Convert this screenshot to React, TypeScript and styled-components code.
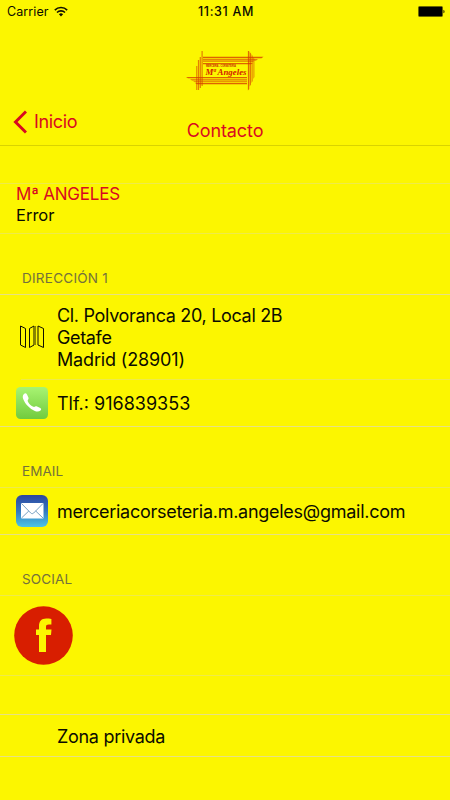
import React from "react";
import styled, { createGlobalStyle } from "styled-components";

const Global = createGlobalStyle`
  * { box-sizing: border-box; }
  body { margin: 0; background: #fcf600; }
`;

const Screen = styled.main`
  width: 450px;
  height: 800px;
  overflow: hidden;
  background: #fcf600;
  color: #0b0b00;
  font-family: Inter, "Liberation Sans", sans-serif;
  display: flex;
  flex-direction: column;
`;

const Header = styled.header`
  height: 146px;
  flex: none;
  border-bottom: 1px solid #d9d300;
  display: flex;
  flex-direction: column;
`;

const StatusBar = styled.div`
  height: 22px;
  display: grid;
  grid-template-columns: 1fr auto 1fr;
  align-items: center;
  padding: 1px 5px 0 7px;
`;

const Carrier = styled.div`
  display: flex;
  align-items: center;
  gap: 6px;
`;

const Battery = styled.div`
  justify-self: end;
  display: flex;
  padding-bottom: 2px;
`;

const LogoArea = styled.div`
  height: 71px;
  padding-top: 27px;
  display: flex;
  justify-content: center;
`;

const NavBar = styled.nav`
  flex: 1;
  display: grid;
  grid-template-columns: 1fr auto 1fr;
  align-items: start;
  padding: 0 0 0 13px;
`;

const Back = styled.a`
  display: flex;
  align-items: center;
  gap: 7px;
  padding-top: 17px;
`;

const Title = styled.h1`
  margin: 27px 13px 0 0;
  font-size: 18px;
  font-weight: 400;
  line-height: 22px;
`;

const Label = styled.span<{ $size?: number; $track?: number; $color?: string; $weight?: number; $line?: number }>`
  font-size: ${(p) => p.$size ?? 18}px;
  letter-spacing: ${(p) => p.$track ?? 0}px;
  color: ${(p) => p.$color ?? "inherit"};
  font-weight: ${(p) => p.$weight ?? 370};
  line-height: ${(p) => p.$line ?? 22}px;
  white-space: nowrap;
  display: block;
`;

const Summary = styled.section`
  height: 51px;
  margin-top: 37px;
  flex: none;
  padding: 0 16px;
  border-top: 1px solid #eeea4a;
  border-bottom: 1px solid #eeea4a;
`;

const SectionTitle = styled.h2`
  height: 60px;
  margin: 0;
  flex: none;
  padding: 0 22px 5px;
  display: flex;
  align-items: flex-end;
`;

const Group = styled.section<{ $faintTop?: boolean; $faintBottom?: boolean }>`
  flex: none;
  border-top: 1px solid ${(p) => (p.$faintTop ? "#eeea4a" : "#e6e184")};
  border-bottom: 1px solid ${(p) => (p.$faintBottom ? "#eeea4a" : "#e6e184")};
`;

const Row = styled.div<{ $height: number }>`
  height: ${(p) => p.$height}px;
  display: grid;
  grid-template-columns: 41px 1fr;
  align-items: center;
  padding-left: 16px;
`;

const RowText = styled.div`
  padding-top: 2px;
`;

const Divider = styled.hr`
  height: 1px;
  margin: 0 0 0 21px;
  border: 0;
  background: #eeea4a;
`;

const SocialRow = styled.div`
  height: 79px;
  padding: 10px 14px;
`;

const Spacer = styled.div`
  height: 38px;
  flex: none;
`;

const red = "#d80a20";
const grey = "#74713c";

const WifiIcon = () => (
  <svg width="14" height="11" viewBox="0 0 14 11" fill="none" stroke="#101000" strokeWidth="1.6" transform="translate(-1 -1)">
    <path d="M.8 4.1a8.8 8.8 0 0 1 12.4 0M3 6.5a5.7 5.7 0 0 1 8 0" />
    <path d="M4.9 8.3a3 3 0 0 1 4.2 0L7 10.4Z" fill="#101000" stroke="none" />
  </svg>
);

const BatteryIcon = () => (
  <svg width="27" height="11" viewBox="0 0 27 11">
    <rect x=".5" y=".5" width="24" height="10" rx="1" fill="#000" stroke="#6b6800" />
    <path d="M25.5 3.7c1.3.4 1.3 3.2 0 3.6Z" fill="#000" />
  </svg>
);

const Logo = () => (
  <svg width="78" height="43" viewBox="0 0 78 43">
    <g fill="#d64000">
      <path d="M15.500 2h1.200v35h-1.200ZM13.700 8h1.200v31h-1.200ZM11.900 11h1.200v30h-1.200ZM10.200 17h1.100v24h-1.100Z" opacity=".65" />
      <path d="M17 7.800h60.500l-2 1.400H17ZM17 10.200h55l-2 1.300H17ZM17 14h50l-2 1.300H17Z" opacity=".8" />
      <path d="M17 12h51l-1 1H17Z" opacity=".5" />
      <path d="M61.900 2h1.300v38l-1.300 1.500ZM63.700 3l1.200 1.500v31l-1.200 2Z" opacity=".75" />
      <path d="M65.500 5l1.200 2v25l-1.200 2ZM67.400 8l1 2v18l-1 2Z" opacity=".6" />
      <path d="M0 28h61v1.300H2ZM9 34h52v1.300H11Z" opacity=".8" />
      <path d="M4 30.200h57v1.200H6ZM7 32.200h54v1H9Z" opacity=".7" />
    </g>
    <text x="20" y="18" fontFamily="Liberation Sans" fontWeight="700" fontSize="2.6" textLength="30" lengthAdjust="spacingAndGlyphs" fill="#c82600">MERCERIA - CORSETERIA</text>
    <text x="19.5" y="26" fontFamily="Liberation Serif" fontWeight="700" fontStyle="italic" fontSize="8.8" textLength="41" fill="#d31800">Mª Angeles</text>
  </svg>
);

const BackIcon = () => (
  <svg width="14" height="24" viewBox="0 0 14 24" fill="none" stroke="#d80a20" strokeWidth="3">
    <path d="M13 1.5 2.5 12 13 22.5" />
  </svg>
);

const MapIcon = () => (
  <svg width="32" height="26" viewBox="0 0 32 26" fill="none" stroke="#111000" strokeWidth="1">
    <path d="M4.5 2 9.5 4.5v19l-5-2.5Z M13.5 4.5 18 2v19l-4.500 2.500Z M22 2l5.500 2.500v19l-5.500-2.500Z" />
    <path d="M19.5 2v19" stroke="#8b8700" />
  </svg>
);

const PhoneIcon = () => (
  <svg width="32" height="32" viewBox="0 0 32 32">
    <defs><linearGradient id="phone" x2="0" y2="1"><stop stopColor="#a8f472" /><stop offset="1" stopColor="#71cb3e" /></linearGradient></defs>
    <rect width="32" height="32" rx="4.5" fill="url(#phone)" />
    <path d="M8 6.900c1.200-.9 2.200-.7 3 .6l1.300 2.700c.5 1 .3 1.700-.3 2.500-.5.7-.4 1.400.1 2.200 1.200 2 2.800 3.500 4.700 4.700.9.600 1.600.6 2.300 0 .6-.5 1.200-.6 2-.2l3.100 1.600c1.100.6 1.300 1.600.3 2.500-1.500 1.400-3.600 1.400-5.600.5C13.900 21.900 9 17 7.200 12 6.500 10 6.600 8.300 8 6.900Z" fill="#fff" />
  </svg>
);

const MailIcon = () => (
  <svg width="32" height="32" viewBox="0 0 32 32">
    <defs><linearGradient id="mail" x2="0" y2="1"><stop stopColor="#2d46a0" /><stop offset=".5" stopColor="#3478bf" /><stop offset="1" stopColor="#4dc5e6" /></linearGradient></defs>
    <rect width="32" height="32" rx="6" fill="url(#mail)" />
    <rect x="5" y="8" width="22.5" height="15.5" rx=".7" fill="#fff" />
    <path d="m5.5 8.5 9.200 9.500c1 .9 2 .9 3 0L27 8.500M5.500 23l7.300-7M27 23l-7.300-7" fill="none" stroke="#6996bb" strokeWidth=".9" />
  </svg>
);

const FacebookIcon = () => (
  <svg width="59" height="59" viewBox="0 0 59 59">
    <circle cx="29.5" cy="29.5" r="29.3" fill="#d81e00" />
    <path d="M25 46V29h-3v-5.500h3v-3.300c0-5 2.500-7.700 7.300-7.700 2 0 3.300.1 5.100.4v5.600h-2.600c-2 0-2.800.7-2.800 2.500v2.500h5.500L37 29h-5v17Z" fill="#fcf600" />
  </svg>
);

export default function App() {
  return (
    <Screen>
      <Global />
      <Header>
        <StatusBar>
          <Carrier><Label $size={12.5} $track={0.1}>Carrier</Label><WifiIcon /></Carrier>
          <Label $size={12.5} $track={0.65} $weight={500}>11:31 AM</Label>
          <Battery><BatteryIcon /></Battery>
        </StatusBar>
        <LogoArea><Logo /></LogoArea>
        <NavBar>
          <Back><BackIcon /><Label $color={red} $track={-0.35}>Inicio</Label></Back>
          <Title><Label $color={red} $track={-0.1}>Contacto</Label></Title>
        </NavBar>
      </Header>
      <Summary>
        <Label $size={17} $track={-0.2} $line={21} $color={red}>Mª ANGELES</Label>
        <Label $size={16.5} $line={21}>Error</Label>
      </Summary>
      <SectionTitle><Label $size={13.5} $track={0.25} $color={grey}>DIRECCIÓN 1</Label></SectionTitle>
      <Group>
        <Row $height={84}>
          <MapIcon />
          <RowText>
            <Label $track={-0.32}>Cl. Polvoranca 20, Local 2B</Label>
            <Label $track={-0.35}>Getafe</Label>
            <Label $track={-0.15}>Madrid (28901)</Label>
          </RowText>
        </Row>
        <Divider />
        <Row $height={46}><PhoneIcon /><RowText><Label>Tlf.: 916839353</Label></RowText></Row>
      </Group>
      <SectionTitle><Label $size={13.5} $track={0.05} $color={grey}>EMAIL</Label></SectionTitle>
      <Group $faintTop>
        <Row $height={46}><MailIcon /><RowText><Label $track={-0.27}>merceriacorseteria.m.angeles@gmail.com</Label></RowText></Row>
      </Group>
      <SectionTitle><Label $size={13.5} $track={0.15} $color={grey}>SOCIAL</Label></SectionTitle>
      <Group $faintTop $faintBottom><SocialRow><FacebookIcon /></SocialRow></Group>
      <Spacer />
      <Group><Row $height={41}><span /><RowText><Label $track={-0.3}>Zona privada</Label></RowText></Row></Group>
    </Screen>
  );
}
